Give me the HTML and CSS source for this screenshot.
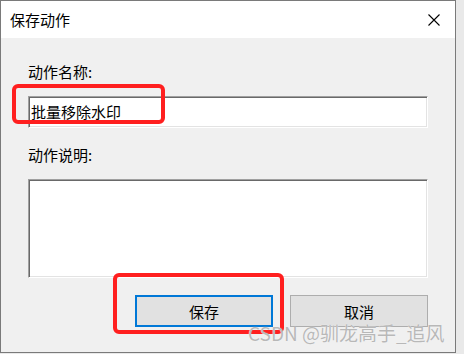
FILE: index.html
```html
<!DOCTYPE html>
<html lang="zh-CN">
<head>
    <meta charset="UTF-8">
    <meta name="viewport" content="width=device-width, initial-scale=1.0">
    <title>保存动作</title>
    <link rel="stylesheet" href="styles.css">
</head>
<body>
    <div class="dialog">
        <div class="title-bar">
            <span class="title">保存动作</span>
            <svg class="close" width="12" height="12" viewBox="0 0 12 12">
                <path d="M0.5 0.5 L11.5 11.5 M11.5 0.5 L0.5 11.5" stroke="#000" stroke-width="1.1" fill="none"/>
            </svg>
        </div>
        <div class="body">
            <label class="field-label">动作名称:</label>
            <div class="text-box name-box">批量移除水印</div>
            <label class="field-label second">动作说明:</label>
            <div class="text-box desc-box"></div>
            <div class="buttons">
                <button class="btn btn-default">保存</button>
                <button class="btn">取消</button>
            </div>
        </div>

        <!-- annotations drawn over the screenshot -->
        <div class="mark mark-name"></div>
        <div class="mark mark-save"></div>
        <div class="watermark">CSDN @驯龙高手_追风</div>
    </div>
</body>
</html>
```

FILE: styles.css
```css
body { margin: 0; background: #e9e9e9; font-family: "Noto Sans CJK SC", "Noto Sans", sans-serif; font-size: 15px; color: #000; }
.dialog { position: relative; width: 454px; height: 351px; border: 1px solid #7a7a7a; background: #f0f0f0; display: flex; flex-direction: column; }
.title-bar { height: 37px; background: #fff; display: flex; align-items: center; justify-content: space-between; padding: 0 15px 0 9px; }
.title { line-height: 20px; }
.close { display: block; }
.body { padding: 0 27px; display: flex; flex-direction: column; }
.field-label { line-height: 20px; margin-top: 24px; }
.field-label.second { margin-top: 17px; }
.text-box { box-sizing: border-box; background: #fff; border: 1px solid; border-color: #a0a0a0 #fff #fff #a0a0a0; box-shadow: inset 1px 1px #696969, inset -1px -1px #e3e3e3; }
.name-box { height: 32px; margin-top: 14px; padding: 0 2px; line-height: 30px; }
.desc-box { height: 99px; margin-top: 14px; }
.buttons { display: flex; justify-content: flex-end; gap: 17px; margin-top: 17px; }
.btn { width: 138px; height: 32px; box-sizing: border-box; background: #e1e1e1; border: 1px solid #adadad; font-family: inherit; font-size: 15px; color: #000; padding: 0; }
.btn-default { border: 2px solid #0078d7; }
.mark { position: absolute; border: 4px solid #ff1f1f; border-radius: 6px; box-sizing: border-box; }
.mark-name { left: 11px; top: 83px; width: 153px; height: 40px; }
.mark-save { left: 112px; top: 272px; width: 171px; height: 61px; }
.watermark { position: absolute; left: 247px; top: 320px; font-size: 19px; line-height: 24px; color: #b8b8b8; white-space: nowrap; text-shadow: 0 0 1px #fff; }
```
